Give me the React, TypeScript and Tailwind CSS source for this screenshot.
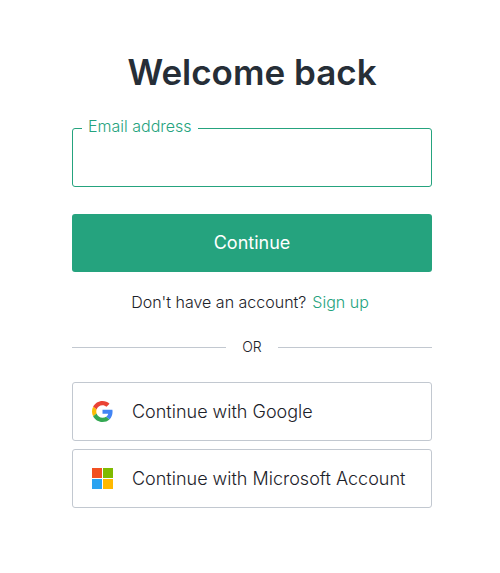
function GoogleLogo() {
  return (
    <svg viewBox="0 0 48 48" className="size-[21px]" aria-hidden="true">
      <path fill="#EA4335" d="M24 9.5c3.54 0 6.71 1.22 9.21 3.6l6.85-6.85C35.9 2.38 30.47 0 24 0 14.62 0 6.51 5.38 2.56 13.22l7.98 6.19C12.43 13.72 17.74 9.5 24 9.5z" />
      <path fill="#4285F4" d="M46.98 24.55c0-1.57-.15-3.09-.38-4.55H24v9.02h12.94c-.58 2.96-2.26 5.48-4.78 7.18l7.73 6c4.51-4.18 7.09-10.36 7.09-17.65z" />
      <path fill="#FBBC05" d="M10.53 28.59c-.48-1.45-.76-2.99-.76-4.59s.27-3.14.76-4.59l-7.98-6.19C.92 16.46 0 20.12 0 24c0 3.88.92 7.54 2.56 10.78l7.97-6.19z" />
      <path fill="#34A853" d="M24 48c6.48 0 11.93-2.13 15.89-5.81l-7.73-6c-2.15 1.45-4.92 2.3-8.16 2.3-6.26 0-11.57-4.22-13.47-9.91l-7.98 6.19C6.51 42.62 14.62 48 24 48z" />
    </svg>
  );
}

function MicrosoftLogo() {
  return (
    <svg viewBox="0 0 21 21" className="size-[21px]" aria-hidden="true">
      <path fill="#f25022" d="M0 0h10v10H0z" />
      <path fill="#7fba00" d="M11 0h10v10H11z" />
      <path fill="#2ba3f0" d="M0 11h10v10H0z" />
      <path fill="#ffb900" d="M11 11h10v10H11z" />
    </svg>
  );
}

const providers = [
  { name: "Google", label: "Continue with Google", Logo: GoogleLogo },
  { name: "Microsoft", label: "Continue with Microsoft Account", Logo: MicrosoftLogo },
];

export default function App() {
  return (
    <main className="min-h-screen bg-white pt-12 pb-16 pl-1 font-['Inter',sans-serif] font-light text-[#1c2229]">
      <div className="mx-auto max-w-[360px]">
        <h1 className="text-center text-[35px] leading-12 font-semibold whitespace-nowrap text-[#262e37]">Welcome back</h1>

        <form className="mt-5" onSubmit={(e) => e.preventDefault()}>
          <fieldset className="rounded-[3px] border border-[#25a37e] pl-[9px]">
            <legend className="px-[6px] text-base leading-6 text-[#25a37e]">
              <label htmlFor="email" className="block pb-1 leading-5">Email address</label>
            </legend>
            <input
              id="email"
              type="email"
              autoComplete="email"
              className="block h-[46px] w-full bg-transparent pr-4 pl-[6px] text-lg outline-none"
            />
          </fieldset>
          <button type="submit" className="mt-[27px] h-[58px] w-full rounded-[3px] bg-[#25a37e] text-lg font-normal text-white">
            Continue
          </button>
        </form>

        <p className="mt-[18px] flex justify-center gap-[6px] pr-1 text-base leading-6">
          <span>Don't have an account?</span>
          <a href="#signup" className="text-[#25a37e]">Sign up</a>
        </p>

        {/* Divider */}
        <div className="mt-[23px] flex items-center gap-4 text-sm leading-5">
          <span className="h-px flex-1 bg-[#c2c8d0]" />
          <span>OR</span>
          <span className="h-px flex-1 bg-[#c2c8d0]" />
        </div>

        {/* Social logins */}
        <div className="mt-[25px] space-y-2">
          {providers.map(({ name, label, Logo }) => (
            <button
              key={name}
              type="button"
              className="flex h-[59px] w-full items-center rounded-[3px] border border-[#c2c8d0] pl-[19px] text-left text-lg"
            >
              <span className="w-10">
                <Logo />
              </span>
              {label}
            </button>
          ))}
        </div>
      </div>
    </main>
  );
}
